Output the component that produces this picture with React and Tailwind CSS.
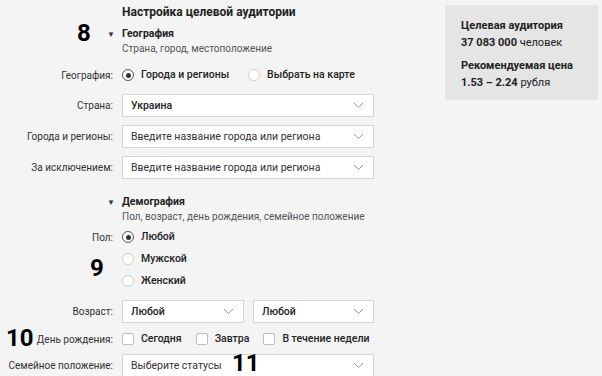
import React from "react";

function Chevron() {
  return (
    <svg width="11" height="7" viewBox="0 0 11 7" className="shrink-0">
      <path d="M1 1l4.5 4.5L10 1" fill="none" stroke="#999" strokeWidth="1" />
    </svg>
  );
}

function Select({ value, placeholder, className = "w-[252px]" }) {
  return (
    <div
      className={`${className} h-[23px] bg-white border border-[#d6d6d6] flex items-center justify-between pl-[8px] pr-[9px]`}
    >
      <span className={value ? "text-[10.5px] font-medium text-[#222]" : "text-[10.5px] text-[#333]"}>
        {value || placeholder}
      </span>
      <Chevron />
    </div>
  );
}

function Radio({ checked, label }) {
  return (
    <div className="flex items-center gap-[7px]">
      <span
        className={`w-[12px] h-[12px] rounded-full bg-white border flex items-center justify-center ${
          checked ? "border-[#555]" : "border-[#cfcfcf]"
        }`}
      >
        {checked && <span className="w-[5px] h-[5px] rounded-full bg-[#333]" />}
      </span>
      <span className="text-[10.5px] font-medium text-[#222]">{label}</span>
    </div>
  );
}

function Checkbox({ label }) {
  return (
    <div className="flex items-center gap-[7px]">
      <span className="w-[12px] h-[12px] rounded-[2px] bg-white border border-[#bdbdbd]" />
      <span className="text-[10.5px] font-medium text-[#222]">{label}</span>
    </div>
  );
}

function Row({ label, children, className = "" }) {
  return (
    <div className={`flex items-center ${className}`}>
      <div className="w-[113px] flex justify-end whitespace-nowrap text-[10px] text-[#333] shrink-0">
        {label}
      </div>
      <div className="ml-[9px] flex items-center">{children}</div>
    </div>
  );
}

function Heading({ title, sub, className = "" }) {
  return (
    <div className={`pl-[122px] ${className}`}>
      <div className="relative h-[16px] flex items-center">
        <span className="absolute left-[-15px] top-[3px] text-[8px] text-[#333]">▼</span>
        <span className="text-[10.5px] font-bold text-[#222]">{title}</span>
      </div>
      <div className="h-[14px] leading-[14px] text-[10px] text-[#555]">{sub}</div>
    </div>
  );
}

const mark = "absolute text-[24px] font-bold leading-[18px] text-black";

export default function App() {
  return (
    <div
      className="relative w-[602px] h-[376px] overflow-hidden bg-[#f4f4f4] flex"
      style={{ fontFamily: "Roboto, 'Noto Sans', sans-serif" }}
    >
      <div className="w-[445px] shrink-0">
        <div className="pl-[122px] pt-[4px] h-[20px] leading-[16px] text-[12px] font-bold text-[#222]">
          Настройка целевой аудитории
        </div>

        <Heading title="География" sub="Страна, город, местоположение" className="mt-[6px]" />

        <Row label="География:" className="mt-[8px] h-[22px]">
          <Radio checked label="Города и регионы" />
          <div className="ml-[19px]">
            <Radio label="Выбрать на карте" />
          </div>
        </Row>

        <Row label="Страна:" className="mt-[8px]">
          <Select value="Украина" />
        </Row>
        <Row label="Города и регионы:" className="mt-[8px]">
          <Select placeholder="Введите название города или региона" />
        </Row>
        <Row label="За исключением:" className="mt-[8px]">
          <Select placeholder="Введите название города или региона" />
        </Row>

        <Heading
          title="Демография"
          sub="Пол, возраст, день рождения, семейное положение"
          className="mt-[15px]"
        />

        <Row label="Пол:" className="mt-[2px] h-[22px]">
          <Radio checked label="Любой" />
        </Row>
        <Row label="" className="h-[22px]">
          <Radio label="Мужской" />
        </Row>
        <Row label="" className="h-[22px]">
          <Radio label="Женский" />
        </Row>

        <Row label="Возраст:" className="mt-[8px]">
          <Select value="Любой" className="w-[122px]" />
          <div className="ml-[9px]">
            <Select value="Любой" className="w-[121px]" />
          </div>
        </Row>

        <Row label="День рождения:" className="mt-[6px] h-[20px]">
          <Checkbox label="Сегодня" />
          <div className="ml-[14px]">
            <Checkbox label="Завтра" />
          </div>
          <div className="ml-[14px]">
            <Checkbox label="В течение недели" />
          </div>
        </Row>

        <Row label="Семейное положение:" className="mt-[5px]">
          <Select placeholder="Выберите статусы" />
        </Row>
      </div>

      <div className="mt-[5px] w-[153px] h-[95px] bg-[#e5e5e5] pl-[16px] pt-[12px] text-[11px] text-[#222]">
        <div className="leading-[17px] font-bold">Целевая аудитория</div>
        <div className="leading-[17px]">
          <span className="font-bold">37 083 000</span> человек
        </div>
        <div className="mt-[6px] leading-[17px] font-bold">Рекомендуемая цена</div>
        <div className="leading-[17px]">
          <span className="font-bold">1.53 – 2.24</span> рубля
        </div>
      </div>

      <span className={`${mark} left-[77px] top-[24px]`}>8</span>
      <span className={`${mark} left-[90px] top-[259px]`}>9</span>
      <span className={`${mark} left-[6px] top-[329px]`}>10</span>
      <span className={`${mark} left-[232px] top-[354px]`}>11</span>
    </div>
  );
}
